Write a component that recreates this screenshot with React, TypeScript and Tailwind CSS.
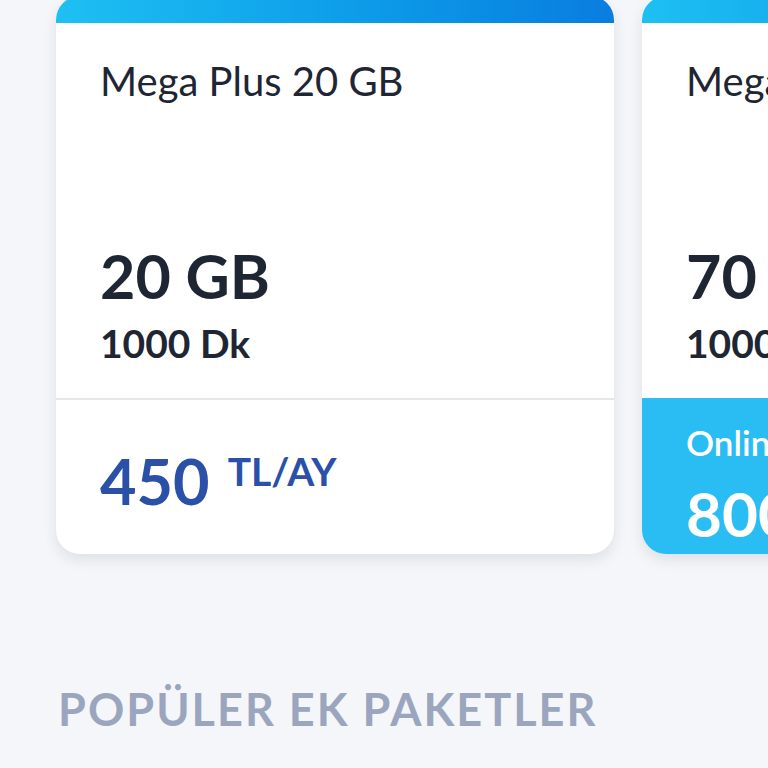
import React from "react";

const font = { fontFamily: "Lato, 'Noto Sans', sans-serif" };

function Card({
  title,
  data,
  minutes,
  highlight,
}: {
  title: string;
  data: string;
  minutes: string;
  highlight?: boolean;
}) {
  return (
    <div className="flex flex-col w-[558px] h-[558px] shrink-0 rounded-[24px] bg-white overflow-hidden shadow-[0_6px_14px_rgba(30,40,70,0.10)]">
      <div className="h-[27px] shrink-0 bg-gradient-to-r from-[#1ec0f3] to-[#0a7ddf]" />
      <div className="flex flex-col h-[375px] shrink-0 px-[44px] pt-[38px] pb-[35px]">
        <div className="text-[40px] leading-[40px] text-[#1f2633] font-normal whitespace-nowrap">{title}</div>
        <div className="flex-1" />
        <div className="text-[61px] leading-[61px] font-bold text-[#1f2633] whitespace-nowrap">{data}</div>
        <div className="mt-[18px] text-[39px] leading-[39px] font-bold text-[#1f2633] whitespace-nowrap">{minutes}</div>
      </div>
      {highlight ? (
        <div className="flex-1 flex flex-col bg-[#29bdf4] px-[44px] pt-[27px]">
          <div className="text-[35px] leading-[35px] font-semibold text-white whitespace-nowrap">Online'a Özel</div>
          <div className="mt-[22px] flex items-start whitespace-nowrap">
            <span className="text-[62px] leading-[62px] font-bold text-white">800</span>
            <span className="ml-[18px] mt-[4px] text-[40px] leading-[40px] font-bold text-white">TL/AY</span>
          </div>
        </div>
      ) : (
        <div className="flex-1 flex flex-col border-t-2 border-[#e5e7eb] px-[44px] pt-[49px]">
          <div className="flex items-start whitespace-nowrap">
            <span className="text-[63px] leading-[63px] font-bold text-[#2a51a7]">450</span>
            <span className="ml-[18px] mt-[3px] text-[39px] leading-[39px] font-bold text-[#2a51a7]">TL/AY</span>
          </div>
        </div>
      )}
    </div>
  );
}

export default function App() {
  return (
    <div className="w-full h-[768px] bg-[#f4f6f9] overflow-hidden" style={font}>
      <div className="flex gap-[28px] pl-[56px] -mt-[4px]">
        <Card title="Mega Plus 20 GB" data="20 GB" minutes="1000 Dk" />
        <Card title="Mega Plus 70 GB" data="70 GB" minutes="1000 Dk" highlight />
      </div>
      <div className="pl-[58px] mt-[133px] text-[45px] leading-[45px] font-bold tracking-[0.045em] text-[#9ba6be] whitespace-nowrap">
        POPÜLER EK PAKETLER
      </div>
    </div>
  );
}
